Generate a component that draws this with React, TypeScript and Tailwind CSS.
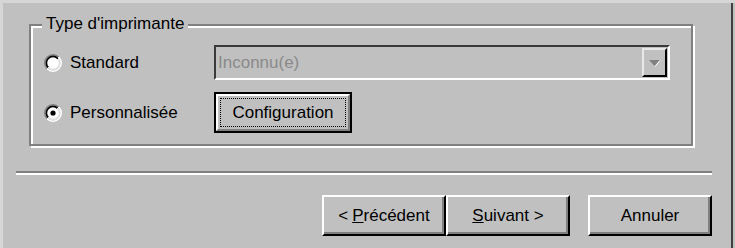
import React from "react";

const font = { fontFamily: '"Liberation Sans", Arial, sans-serif' };

function Radio({ checked }: { checked?: boolean }) {
  return (
    <svg width="18" height="18" viewBox="0 0 18 18" className="shrink-0">
      <defs>
        <linearGradient id="rOuter" gradientUnits="userSpaceOnUse" x1="0" y1="0" x2="18" y2="18">
          <stop offset="0.5" stopColor="#808080" />
          <stop offset="0.5" stopColor="#ffffff" />
        </linearGradient>
        <linearGradient id="rInner" gradientUnits="userSpaceOnUse" x1="0" y1="0" x2="18" y2="18">
          <stop offset="0.5" stopColor="#000000" />
          <stop offset="0.5" stopColor="#dfdfdf" />
        </linearGradient>
      </defs>
      <circle cx="9" cy="9" r="8.2" fill="none" stroke="url(#rOuter)" strokeWidth="1.6" />
      <circle cx="9" cy="9" r="6.6" fill="#fff" stroke="url(#rInner)" strokeWidth="1.6" />
      {checked && <circle cx="9" cy="9" r="2.6" fill="#000" />}
    </svg>
  );
}

function WizButton({ children, className = "" }: { children: React.ReactNode; className?: string }) {
  return (
    <button
      className={`h-[41px] w-[124px] bg-[#c0c0c0] border-t-2 border-l-2 border-white border-r-2 border-b-2 border-r-black border-b-black shadow-[inset_-2px_-2px_0_#808080] text-[17px] text-black flex items-center justify-center ${className}`}
      style={font}
    >
      {children}
    </button>
  );
}

export default function App() {
  return (
    <div
      className="w-[735px] h-[248px] bg-[#c0c0c0] border-t-[3px] border-l-[3px] border-[#d6d6d6] overflow-hidden flex"
      style={font}
    >
      <div className="w-[730px] h-full flex flex-col border-r-2 border-[#404040]">
        {/* Group box */}
        <div className="relative ml-[26px] mt-[21px] w-[664px] h-[122px] border-2 border-[#808080] shadow-[inset_2px_2px_0_#fff,2px_2px_0_#fff]">
          <span className="absolute left-[11px] top-[-12px] px-[4px] bg-[#c0c0c0] text-[17px] leading-[20px] text-black">
            Type d'imprimante
          </span>
          <div className="pl-[13px] pt-[19px] flex flex-col gap-[12px]">
            <div className="flex items-center h-[35px]">
              <div className="w-[170px] flex items-center gap-[8px]">
                <Radio />
                <span className="text-[17px] text-black">Standard</span>
              </div>
              <div className="w-[456px] h-[35px] border-t-2 border-l-2 border-[#3a3a3a] border-b-2 border-r-2 border-b-white border-r-white flex items-center">
                <span className="flex-1 pl-[2px] text-[17px] text-[#8a8a8a]">Inconnu(e)</span>
                <div className="w-[25px] h-[29px] mr-[1px] bg-[#c0c0c0] border-t-2 border-l-2 border-[#e8e8e8] border-b-2 border-r-2 border-b-black border-r-black flex items-center justify-center">
                  <svg width="13" height="8" viewBox="0 0 13 8">
                    <path d="M1 1h11L6.5 7z" fill="#808080" />
                    <path d="M12 1.5L7 7.5" stroke="#fff" strokeWidth="1" />
                  </svg>
                </div>
              </div>
            </div>
            <div className="flex items-center h-[41px]">
              <div className="w-[170px] flex items-center gap-[8px]">
                <Radio checked />
                <span className="text-[17px] text-black">Personnalisée</span>
              </div>
              <button className="w-[138px] h-[41px] border-2 border-black bg-[#c0c0c0] p-0">
                <div className="w-full h-full border-t-2 border-l-2 border-white border-b-2 border-r-2 border-b-[#808080] border-r-[#808080] p-[2px]">
                  <div className="w-full h-full border border-dotted border-black flex items-center justify-center text-[17px] text-black">
                    Configuration
                  </div>
                </div>
              </button>
            </div>
          </div>
        </div>

        {/* Separator */}
        <div className="ml-[13px] mt-[25px] w-[696px] h-[4px] border-t-2 border-[#808080] border-b-2 border-b-white" />

        {/* Wizard buttons */}
        <div className="mt-[20px] flex justify-end pr-[19px]">
          <WizButton className="w-[123px]">
            &lt; <span className="underline ml-[4px]">P</span>récédent
          </WizButton>
          <WizButton>
            <span className="underline">S</span>uivant &gt;
          </WizButton>
          <WizButton className="ml-[18px]">Annuler</WizButton>
        </div>
      </div>
    </div>
  );
}
